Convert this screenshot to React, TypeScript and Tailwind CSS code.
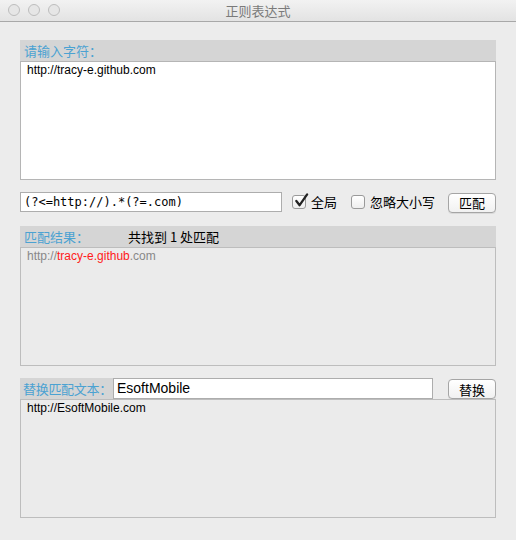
import { useState } from "react";

const cjk = { fontFamily: '"Noto Sans CJK SC", "Liberation Sans", sans-serif' };
const sans = { fontFamily: '"Liberation Sans", Arial, sans-serif' };
const mono = { fontFamily: '"DejaVu Sans Mono", "Liberation Mono", monospace' };

function Checkbox({ checked, label }: { checked: boolean; label: string }) {
  return (
    <label className="flex items-center gap-[5px] text-[13px] text-black" style={cjk}>
      <span className="relative w-[14px] h-[14px] rounded-[3px] border border-[#9a9a9a] bg-gradient-to-b from-white to-[#eeeeee]">
        {checked && (
          <svg viewBox="0 0 16 16" className="absolute -top-[3px] left-[1px] w-[15px] h-[15px]">
            <path d="M2.5 8.5 L6 13 L14 1.5" fill="none" stroke="#222" strokeWidth="2.4" strokeLinecap="round" strokeLinejoin="round" />
          </svg>
        )}
      </span>
      {label}
    </label>
  );
}

function Button({ label }: { label: string }) {
  return (
    <button
      className="w-[48px] h-[20px] rounded-[4px] border border-[#a5a5a5] bg-gradient-to-b from-white to-[#f1f1f1] text-[13px] leading-none text-black shadow-[0_1px_0_rgba(0,0,0,0.08)]"
      style={cjk}
    >
      {label}
    </button>
  );
}

export default function App() {
  const [source] = useState("http://tracy-e.github.com");

  return (
    <div className="w-[516px] h-[540px] bg-[#ececec] flex flex-col">
      {/* Title bar */}
      <div className="relative h-[22px] border-b border-[#a8a8a8] bg-gradient-to-b from-[#f2f2f2] to-[#e3e3e3] flex items-center justify-center">
        <div className="absolute left-[8px] top-[4px] flex gap-[8px]">
          <span className="w-[12px] h-[12px] rounded-full border border-[#bdbdbd] bg-[#e6e6e6]" />
          <span className="w-[12px] h-[12px] rounded-full border border-[#bdbdbd] bg-[#e6e6e6]" />
          <span className="w-[12px] h-[12px] rounded-full border border-[#bdbdbd] bg-[#e6e6e6]" />
        </div>
        <span className="text-[13px] text-[#7a7a7a]" style={cjk}>正则表达式</span>
      </div>

      <div className="px-[20px] pt-[18px] flex flex-col">
        {/* Input section */}
        <div className="w-[476px] h-[21px] bg-[#d5d5d5] flex items-center pl-[4px]">
          <span className="text-[13px] text-[#4ba2d2]" style={cjk}>请输入字符：</span>
        </div>
        <div className="w-[476px] h-[119px] bg-white border border-[#b5b5b5] px-[6px] pt-[1px]">
          <div className="text-[12px] leading-[14px] text-black" style={sans}>{source}</div>
        </div>

        {/* Regex row */}
        <div className="mt-[12px] h-[20px] flex items-center">
          <div className="w-[262px] h-[20px] bg-white border border-[#adadad] flex items-center px-[3px]">
            <span className="text-[12px] text-black" style={mono}>(?&lt;=http://).*(?=.com)</span>
          </div>
          <div className="ml-[10px]">
            <Checkbox checked label="全局" />
          </div>
          <div className="ml-[14px]">
            <Checkbox checked={false} label="忽略大小写" />
          </div>
          <div className="ml-auto">
            <Button label="匹配" />
          </div>
        </div>

        {/* Result section */}
        <div className="mt-[14px] w-[476px] h-[21px] bg-[#d5d5d5] flex items-center pl-[4px]">
          <span className="w-[104px] text-[13px] text-[#4ba2d2]" style={cjk}>匹配结果：</span>
          <span className="text-[13px] text-black" style={cjk}>共找到 1 处匹配</span>
        </div>
        <div className="w-[476px] h-[119px] bg-[#ebebeb] border border-[#bdbdbd] px-[6px] pt-[1px]">
          <div className="text-[12px] leading-[14px] text-[#888888]" style={sans}>
            http://<span className="text-[#ff1a1a]">tracy-e.github</span>.com
          </div>
        </div>

        {/* Replace section */}
        <div className="mt-[12px] w-[476px] h-[21px] flex items-center">
          <div className="h-[21px] w-[93px] bg-[#d5d5d5] flex items-center pl-[3px] overflow-hidden">
            <span className="whitespace-nowrap text-[13px] tracking-[-0.3px] text-[#4ba2d2]" style={cjk}>替换匹配文本：</span>
          </div>
          <div className="w-[320px] h-[21px] bg-white border border-[#adadad] flex items-center px-[3px]">
            <span className="text-[14px] text-black" style={sans}>EsoftMobile</span>
          </div>
          <div className="ml-auto">
            <Button label="替换" />
          </div>
        </div>
        <div className="w-[476px] h-[119px] bg-[#ebebeb] border border-[#bdbdbd] px-[6px] pt-[1px]">
          <div className="text-[12px] leading-[14px] text-black" style={sans}>http://EsoftMobile.com</div>
        </div>
      </div>
    </div>
  );
}
